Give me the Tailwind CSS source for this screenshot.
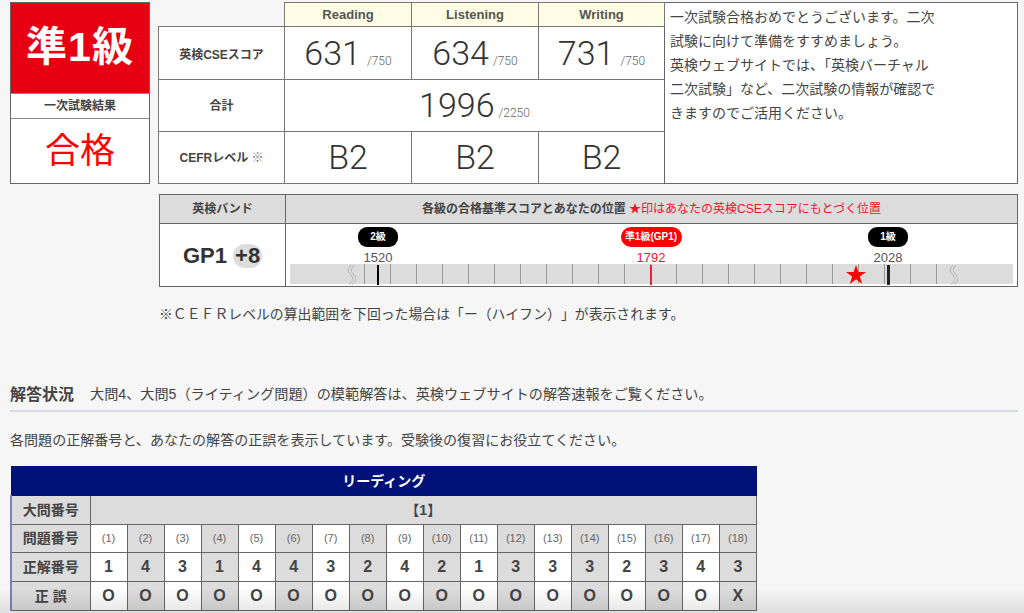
<!DOCTYPE html>
<html lang="ja">
<head>
  <meta charset="UTF-8" />
  <meta name="viewport" content="width=device-width, initial-scale=1.0"/>
  <title>英検 成績表</title>
  <script src="https://cdn.jsdelivr.net/npm/@tailwindcss/browser@4"></script>
</head>
<body class="relative h-[613px] overflow-hidden bg-[#f6f6f6] text-[#444] [text-spacing-trim:space-all] font-['Liberation_Sans','Noto_Sans_CJK_JP',sans-serif]">
  <div class="pl-[10px] pr-[6px] pt-[2px] w-[1024px]">

    <!-- top: grade + scores -->
    <div class="flex gap-[8px]">
      <div class="w-[141px] h-[182px] flex flex-col border border-[#666] bg-white text-center">
        <div class="h-[90px] bg-[#e60012] text-white text-[41px] tracking-[1px] font-bold flex items-center justify-center">準1級</div>
        <div class="h-[26px] border-y border-[#888] text-[12px] font-bold flex items-center justify-center">一次試験結果</div>
        <div class="flex-1 text-[red] text-[35px] flex items-center justify-center">合格</div>
      </div>

      <table class="w-[859px] h-[182px] table-fixed border-collapse text-center">
        <colgroup>
          <col class="w-[126px]"/><col class="w-[127px]"/><col class="w-[127px]"/><col class="w-[126px]"/><col class="w-[353px]"/>
        </colgroup>
        <tr class="h-[24px] text-[13px]">
          <td></td>
          <td class="border border-[#777] bg-[#fffde3] font-bold text-[#555]">Reading</td>
          <td class="border border-[#777] bg-[#fffde3] font-bold text-[#555]">Listening</td>
          <td class="border border-[#777] bg-[#fffde3] font-bold text-[#555]">Writing</td>
          <td rowspan="4" class="border border-[#666] bg-white align-top text-left text-[14px] leading-[24px] pl-[5px] pt-[2px] [text-spacing-trim:normal]">
            一次試験合格おめでとうございます。二次<br/>試験に向けて準備をすすめましょう。<br/>英検ウェブサイトでは、「英検バーチャル<br/>二次試験」など、二次試験の情報が確認で<br/>きますのでご活用ください。
          </td>
        </tr>
        <tr class="h-[53px] bg-white">
          <td class="border border-[#777] text-[12px] font-bold pt-[3px]">英検CSEスコア</td>
          <td class="border border-[#777] text-[34px] font-['Roboto'] font-light text-[#333] whitespace-nowrap">631<span class="ml-[6px] text-[12px] text-[#666]">/750</span></td>
          <td class="border border-[#777] text-[34px] font-['Roboto'] font-light text-[#333] whitespace-nowrap">634<span class="ml-[4px] text-[12px] text-[#666]">/750</span></td>
          <td class="border border-[#777] text-[34px] font-['Roboto'] font-light text-[#333] whitespace-nowrap">731<span class="ml-[6px] text-[12px] text-[#666]">/750</span></td>
        </tr>
        <tr class="h-[52px] bg-white">
          <td class="border border-[#777] text-[12px] font-bold pt-[1px]">合計</td>
          <td colspan="3" class="border border-[#777] text-[34px] font-['Roboto'] font-light text-[#333]">1996<span class="ml-[4px] text-[12px] text-[#666]">/2250</span></td>
        </tr>
        <tr class="h-[52px] bg-white">
          <td class="border border-[#777] text-[12px] font-bold">CEFRレベル <span class="font-normal text-[#777]">※</span></td>
          <td class="border border-[#777] text-[34px] font-['Roboto'] font-light text-[#333]">B2</td>
          <td class="border border-[#777] text-[34px] font-['Roboto'] font-light text-[#333]">B2</td>
          <td class="border border-[#777] text-[34px] font-['Roboto'] font-light text-[#333]">B2</td>
        </tr>
      </table>
    </div>

    <!-- band -->
    <table class="ml-[149px] mt-[10px] w-[859px] table-fixed border-collapse text-center">
      <colgroup><col class="w-[126px]"/><col/></colgroup>
      <tr class="h-[29px] bg-[#dcdcdc] text-[12px] font-bold">
        <td class="border border-[#666]">英検バンド</td>
        <td class="border border-[#666]">各級の合格基準スコアとあなたの位置 <span class="font-normal text-[#f0142d]">★印はあなたの英検CSEスコアにもとづく位置</span></td>
      </tr>
      <tr class="h-[63px] bg-white">
        <td class="border border-[#666] text-[22px] font-bold"><span class="text-[#333]">GP1</span> <span class="inline-block h-[24px] leading-[24px] px-[2px] rounded-full bg-[#ddd] text-[#333]">+8</span></td>
        <td class="border border-[#666] p-0">
          <div class="relative h-[62px] flex flex-col justify-end px-[4px] pb-[2px]">
            <div class="h-[20px] bg-[#dcdcdc] flex pl-[74px]">
              <i class="block w-[26px] border-l border-[#999]"></i><i class="block w-[26px] border-l border-[#999]"></i><i class="block w-[26px] border-l border-[#999]"></i><i class="block w-[26px] border-l border-[#999]"></i><i class="block w-[26px] border-l border-[#999]"></i><i class="block w-[26px] border-l border-[#999]"></i><i class="block w-[26px] border-l border-[#999]"></i><i class="block w-[26px] border-l border-[#999]"></i><i class="block w-[26px] border-l border-[#999]"></i><i class="block w-[26px] border-l border-[#999]"></i><i class="block w-[26px] border-l border-[#999]"></i><i class="block w-[26px] border-l border-[#999]"></i><i class="block w-[26px] border-l border-[#999]"></i><i class="block w-[26px] border-l border-[#999]"></i><i class="block w-[26px] border-l border-[#999]"></i><i class="block w-[26px] border-l border-[#999]"></i><i class="block w-[26px] border-l border-[#999]"></i><i class="block w-[26px] border-l border-[#999]"></i><i class="block w-[26px] border-l border-[#999]"></i><i class="block w-[26px] border-l border-[#999]"></i><i class="block w-[26px] border-l border-[#999]"></i><i class="block w-[26px] border-l border-[#999]"></i><i class="block w-[26px] border-l border-[#999]"></i>
            </div>

            <!-- squiggles -->
            <svg class="absolute left-[60px] top-[41px]" width="10" height="20" viewBox="0 0 10 20" fill="none" stroke="#aaa" stroke-width="0.8"><path d="M5 0C1 5 2 7 5 10S7 16 3 20"/><path d="M8 0C4 5 5 7 8 10S10 16 6 20"/></svg>
            <svg class="absolute left-[662px] top-[41px]" width="10" height="20" viewBox="0 0 10 20" fill="none" stroke="#aaa" stroke-width="0.8"><path d="M5 0C1 5 2 7 5 10S7 16 3 20"/><path d="M8 0C4 5 5 7 8 10S10 16 6 20"/></svg>

            <!-- 2級 -->
            <div class="absolute left-[92px] top-0 h-[61px] w-0 flex flex-col items-center">
              <span class="mt-[3px] shrink-0 w-[40px] h-[20px] rounded-[9px] bg-black text-white text-[10px] font-bold leading-[20px]">2級</span>
              <span class="mt-[3px] shrink-0 text-[13px] leading-[15px] text-[#555]">1520</span>
              <i class="block shrink-0 w-[2px] h-[20px] bg-black"></i>
            </div>
            <!-- 準1級 -->
            <div class="absolute left-[365px] top-0 h-[61px] w-0 flex flex-col items-center">
              <span class="mt-[3px] shrink-0 w-[61px] h-[20px] rounded-[10px] bg-[red] text-white text-[10px] font-bold leading-[20px] whitespace-nowrap">準1級(GP1)</span>
              <span class="mt-[3px] shrink-0 text-[13px] leading-[15px] text-[#f0142d]">1792</span>
              <i class="block shrink-0 w-[2px] h-[20px] bg-[#e8203a]"></i>
            </div>
            <!-- 1級 -->
            <div class="absolute left-[602px] top-0 h-[61px] w-0 flex flex-col items-center">
              <span class="mt-[3px] shrink-0 w-[40px] h-[20px] rounded-[9px] bg-black text-white text-[10px] font-bold leading-[20px]">1級</span>
              <span class="mt-[3px] shrink-0 text-[13px] leading-[15px] text-[#555]">2028</span>
              <i class="block shrink-0 w-[3px] h-[20px] bg-[#222]"></i>
            </div>
            <!-- star -->
            <svg class="absolute left-[560px] top-[41px]" width="20" height="19" viewBox="0 0 20 19" fill="red"><polygon points="10,0 12.4,7 20,7 13.8,11.4 16.2,19 10,14.3 3.8,19 6.2,11.4 0,7 7.6,7"/></svg>
          </div>
        </td>
      </tr>
    </table>

    <p class="ml-[149px] mt-[17px] text-[13.87px] leading-[20px]">※ＣＥＦＲレベルの算出範囲を下回った場合は「ー（ハイフン）」が表示されます。</p>

    <!-- answers -->
    <div class="mt-[60px] h-[28px] flex items-center border-b-2 border-[#d5d9e8] pb-[5px] w-[1008px]">
      <h2 class="text-[16px] font-bold w-[80px]">解答状況</h2>
      <p class="text-[14.15px]">大問4、大問5（ライティング問題）の模範解答は、英検ウェブサイトの解答速報をご覧ください。</p>
    </div>
    <p class="mt-[18px] text-[14.05px] leading-[20px]">各問題の正解番号と、あなたの解答の正誤を表示しています。受験後の復習にお役立てください。</p>

    <table class="mt-[16px] w-[747px] table-fixed border-collapse text-center [&_td:nth-child(odd)]:bg-[#dcdcdc] [&_td]:bg-white">
      <colgroup><col class="w-[79px]"/></colgroup>
      <tr class="h-[29px]">
        <th colspan="19" class="bg-[#001278] text-white text-[14px] font-bold border border-[#001278]">リーディング</th>
      </tr>
      <tr class="h-[29px]">
        <th class="bg-[#dcdcdc] border border-[#666] border-l-2 border-l-[#7a82c0] text-[14px]">大問番号</th>
        <th colspan="18" class="bg-[#dcdcdc] border border-[#666] text-[14px]">【1】</th>
      </tr>
      <tr class="h-[28px] text-[11px] text-[#666] [&_td]:border [&_td]:border-[#666]">
        <th class="bg-[#dcdcdc] border border-[#666] border-l-2 border-l-[#7a82c0] text-[14px] text-[#444]">問題番号</th>
        <td>(1)</td><td>(2)</td><td>(3)</td><td>(4)</td><td>(5)</td><td>(6)</td><td>(7)</td><td>(8)</td><td>(9)</td><td>(10)</td><td>(11)</td><td>(12)</td><td>(13)</td><td>(14)</td><td>(15)</td><td>(16)</td><td>(17)</td><td>(18)</td>
      </tr>
      <tr class="h-[29px] text-[16px] font-bold [&_td]:border [&_td]:border-[#666]">
        <th class="bg-[#dcdcdc] border border-[#666] border-l-2 border-l-[#7a82c0] text-[14px]">正解番号</th>
        <td>1</td><td>4</td><td>3</td><td>1</td><td>4</td><td>4</td><td>3</td><td>2</td><td>4</td><td>2</td><td>1</td><td>3</td><td>3</td><td>3</td><td>2</td><td>3</td><td>4</td><td>3</td>
      </tr>
      <tr class="h-[29px] text-[16px] font-bold [&_td]:border [&_td]:border-[#666]">
        <th class="bg-[#dcdcdc] border border-[#666] border-l-2 border-l-[#7a82c0] text-[14px]">正 誤</th>
        <td>O</td><td>O</td><td>O</td><td>O</td><td>O</td><td>O</td><td>O</td><td>O</td><td>O</td><td>O</td><td>O</td><td>O</td><td>O</td><td>O</td><td>O</td><td>O</td><td>O</td><td>X</td>
      </tr>
    </table>
  </div>

  <!-- screenshot fade at the bottom edge -->
  <div class="absolute left-0 right-0 bottom-0 h-[25px] bg-gradient-to-b from-transparent to-black/10 pointer-events-none"></div>
</body>
</html>
